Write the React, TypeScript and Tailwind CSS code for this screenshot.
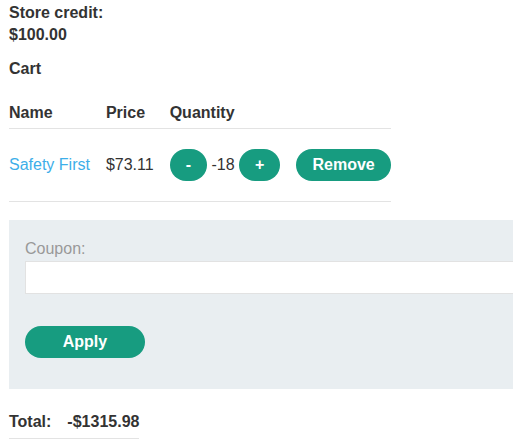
export default function App() {
  const btn =
    "h-8 rounded-full bg-[#179c80] px-4 font-bold text-white leading-8"

  return (
    <div className="min-h-screen overflow-hidden bg-white font-['Liberation_Sans',Arial,sans-serif] text-base text-[#333]">
      <div className="pl-[9px] pt-[2px]">
        {/* Store credit */}
        <div className="font-bold leading-[22px]">
          <div>Store credit:</div>
          <div>$100.00</div>
        </div>

        <div className="mt-[12px] font-bold leading-[22px]">Cart</div>

        {/* Cart table */}
        <table className="mt-[14px] border-collapse text-left">
          <thead>
            <tr className="border-b border-[#e3e3e3]">
              <th className="pb-1 pr-4 pt-2 leading-[22px]">Name</th>
              <th className="pb-1 pr-4 pt-2 leading-[22px]">Price</th>
              <th className="pb-1 pr-4 pt-2 leading-[22px]">Quantity</th>
              <th className="pb-1 pt-2 leading-[22px]"></th>
            </tr>
          </thead>
          <tbody>
            <tr className="border-b border-[#e3e3e3]">
              <td className="py-5 pr-4 align-middle">
                <a href="#" className="text-[#3daee9]">
                  Safety First
                </a>
              </td>
              <td className="py-5 pr-4 align-middle">$73.11</td>
              <td className="py-5 pr-4 align-middle">
                <div className="flex items-center gap-[4.5px]">
                  <button className={btn}>-</button>
                  <span>-18</span>
                  <button className={btn}>+</button>
                </div>
              </td>
              <td className="py-5 align-middle">
                <button className={btn}>Remove</button>
              </td>
            </tr>
          </tbody>
        </table>

        {/* Coupon */}
        <div className="mt-[18px] w-[560px] bg-[#e9eef1] px-4 pb-[31px] pt-[18px]">
          <label className="block leading-[22px] text-[#999]">Coupon:</label>
          <input
            type="text"
            className="mt-[1px] block h-[33px] w-full border border-[#e2e2e2] bg-white px-2 outline-none"
          />
          <button className="mt-[32px] h-8 w-[120px] rounded-full bg-[#179c80] font-bold leading-8 text-white">
            Apply
          </button>
        </div>

        {/* Total */}
        <table className="mt-4 border-collapse text-left">
          <tbody>
            <tr className="border-b border-[#e3e3e3]">
              <td className="pb-[7px] pr-4 pt-2 font-bold leading-[18px]">Total:</td>
              <td className="pb-[7px] pt-2 font-bold leading-[18px]">-$1315.98</td>
            </tr>
          </tbody>
        </table>
      </div>
    </div>
  )
}
